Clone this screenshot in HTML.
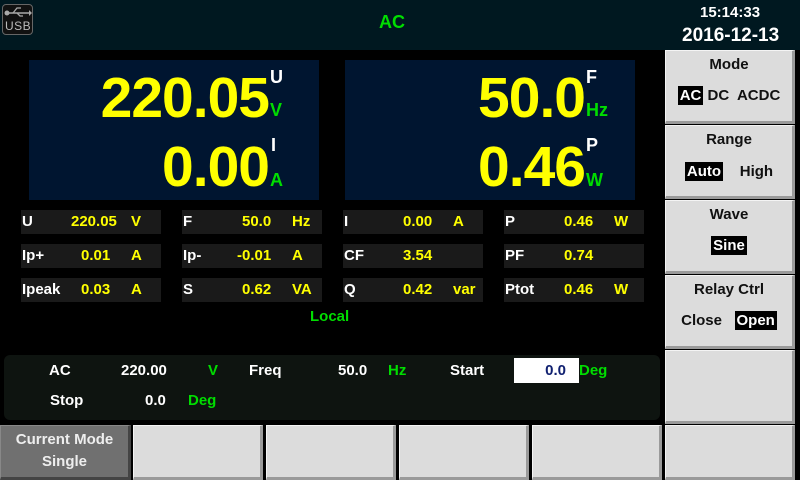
<!DOCTYPE html>
<html><head><meta charset="utf-8"><style>
*{margin:0;padding:0;box-sizing:border-box}
body{width:800px;height:480px;background:#000;font-family:"Liberation Sans",sans-serif;font-weight:bold;position:relative;overflow:hidden;color:#fff}
.a{position:absolute;white-space:nowrap}
.top{left:0;top:0;width:800px;height:50px;background:#001820}
.panel{background:#001530;top:60px;height:140px}
.big{font-size:57px;color:#ff0;text-align:right;line-height:57px;letter-spacing:-1px}
.su{font-size:18px;color:#fff}
.sg{font-size:18px;color:#0d0}
.cell{background:#1a1a1a;height:24px;width:140px;font-size:15px;line-height:24px}
.cell span{position:absolute}
.y{color:#ff0}
.btn{background:#dcdcdc;border-right:3px solid #9a9a9a;border-bottom:3px solid #9a9a9a;border-top:1px solid #f4f4f4;border-left:1px solid #f4f4f4;color:#111;text-align:center;font-size:15px}
.inv{background:#000;color:#fff;padding:1px 2px}
.g{color:#0d0}
.t15{font-size:15px}
</style></head><body>
<div class="a top"></div>
<div class="a" style="left:2px;top:4px;width:31px;height:31px;border:1px solid #666;border-radius:4px;background:#111"></div>
<svg class="a" style="left:3px;top:6px" width="29" height="12" viewBox="0 0 29 12"><line x1="3" y1="7" x2="27" y2="7" stroke="#aaa" stroke-width="1.5"/><circle cx="4" cy="7" r="2.5" fill="#aaa"/><path d="M10 7 L14 2 H18 M14 7 L17 10 H20" stroke="#aaa" fill="none" stroke-width="1.3"/><path d="M26 4 L29 7 L26 10Z" fill="#aaa"/></svg>
<div class="a" style="left:5px;top:19px;font-size:12px;font-weight:normal;color:#bbb;letter-spacing:0.5px">USB</div>
<div class="a g" style="left:379px;top:12px;font-size:18px">AC</div>
<div class="a" style="left:700px;top:4px;font-size:15px">15:14:33</div>
<div class="a" style="left:682px;top:25px;font-size:19px">2016-12-13</div>

<div class="a panel" style="left:29px;width:290px"></div>
<div class="a panel" style="left:345px;width:290px"></div>
<div class="a big" style="left:29px;top:70px;width:240px">220.05</div>
<div class="a big" style="left:29px;top:139px;width:240px">0.00</div>
<div class="a su" style="left:270px;top:67px">U</div>
<div class="a sg" style="left:270px;top:100px">V</div>
<div class="a su" style="left:271px;top:135px">I</div>
<div class="a sg" style="left:270px;top:170px">A</div>
<div class="a big" style="left:345px;top:70px;width:240px">50.0</div>
<div class="a big" style="left:345px;top:139px;width:240px">0.46</div>
<div class="a su" style="left:586px;top:67px">F</div>
<div class="a sg" style="left:586px;top:100px">Hz</div>
<div class="a su" style="left:586px;top:135px">P</div>
<div class="a sg" style="left:586px;top:170px">W</div>

<div class="a cell" style="left:21px;top:210px"><span style="left:1px">U</span><span class="y" style="left:50px">220.05</span><span class="y" style="left:110px">V</span></div>
<div class="a cell" style="left:21px;top:244px"><span style="left:1px">Ip+</span><span class="y" style="left:60px">0.01</span><span class="y" style="left:110px">A</span></div>
<div class="a cell" style="left:21px;top:278px"><span style="left:1px">Ipeak</span><span class="y" style="left:60px">0.03</span><span class="y" style="left:110px">A</span></div>
<div class="a cell" style="left:182px;top:210px"><span style="left:1px">F</span><span class="y" style="left:60px">50.0</span><span class="y" style="left:110px">Hz</span></div>
<div class="a cell" style="left:182px;top:244px"><span style="left:1px">Ip-</span><span class="y" style="left:55px">-0.01</span><span class="y" style="left:110px">A</span></div>
<div class="a cell" style="left:182px;top:278px"><span style="left:1px">S</span><span class="y" style="left:60px">0.62</span><span class="y" style="left:110px">VA</span></div>
<div class="a cell" style="left:343px;top:210px"><span style="left:1px">I</span><span class="y" style="left:60px">0.00</span><span class="y" style="left:110px">A</span></div>
<div class="a cell" style="left:343px;top:244px"><span style="left:1px">CF</span><span class="y" style="left:60px">3.54</span></div>
<div class="a cell" style="left:343px;top:278px"><span style="left:1px">Q</span><span class="y" style="left:60px">0.42</span><span class="y" style="left:110px">var</span></div>
<div class="a cell" style="left:504px;top:210px"><span style="left:1px">P</span><span class="y" style="left:60px">0.46</span><span class="y" style="left:110px">W</span></div>
<div class="a cell" style="left:504px;top:244px"><span style="left:1px">PF</span><span class="y" style="left:60px">0.74</span></div>
<div class="a cell" style="left:504px;top:278px"><span style="left:1px">Ptot</span><span class="y" style="left:60px">0.46</span><span class="y" style="left:110px">W</span></div>
<div class="a g t15" style="left:310px;top:308px">Local</div>

<div class="a" style="left:4px;top:355px;width:656px;height:65px;background:#0e1410;border-radius:6px"></div>
<div class="a t15" style="left:49px;top:362px">AC</div>
<div class="a t15" style="left:121px;top:362px">220.00</div>
<div class="a t15 g" style="left:208px;top:362px">V</div>
<div class="a t15" style="left:249px;top:362px">Freq</div>
<div class="a t15" style="left:338px;top:362px">50.0</div>
<div class="a t15 g" style="left:388px;top:362px">Hz</div>
<div class="a t15" style="left:450px;top:362px">Start</div>
<div class="a t15" style="left:514px;top:358px;width:65px;height:25px;background:#fff;color:#102070;text-align:right;padding-right:13px;line-height:25px">0.0</div>
<div class="a t15 g" style="left:579px;top:362px">Deg</div>
<div class="a t15" style="left:50px;top:392px">Stop</div>
<div class="a t15" style="left:145px;top:392px">0.0</div>
<div class="a t15 g" style="left:188px;top:392px">Deg</div>

<div class="a btn" style="left:665px;top:50px;width:130px;height:74px"><div style="margin-top:5px">Mode</div><div style="margin-top:14px"><span class="inv">AC</span> DC&nbsp; ACDC</div></div>
<div class="a btn" style="left:665px;top:125px;width:130px;height:74px"><div style="margin-top:5px">Range</div><div style="margin-top:15px"><span class="inv">Auto</span>&nbsp;&nbsp;&nbsp; High</div></div>
<div class="a btn" style="left:665px;top:200px;width:130px;height:74px"><div style="margin-top:5px">Wave</div><div style="margin-top:14px"><span class="inv">Sine</span></div></div>
<div class="a btn" style="left:665px;top:275px;width:130px;height:74px"><div style="margin-top:5px">Relay Ctrl</div><div style="margin-top:14px">Close&nbsp;&nbsp; <span class="inv">Open</span></div></div>
<div class="a btn" style="left:665px;top:350px;width:130px;height:74px"></div>
<div class="a btn" style="left:665px;top:425px;width:130px;height:55px"></div>

<div class="a btn" style="left:0;top:425px;width:131px;height:55px;background:#707070;color:#eee;border-top-color:#888;border-left-color:#888;border-right-color:#444;border-bottom-color:#444;line-height:22px;padding-top:3px">Current Mode<br>Single</div>
<div class="a btn" style="left:133px;top:425px;width:130px;height:55px"></div>
<div class="a btn" style="left:266px;top:425px;width:130px;height:55px"></div>
<div class="a btn" style="left:399px;top:425px;width:130px;height:55px"></div>
<div class="a btn" style="left:532px;top:425px;width:130px;height:55px"></div>
</body></html>
